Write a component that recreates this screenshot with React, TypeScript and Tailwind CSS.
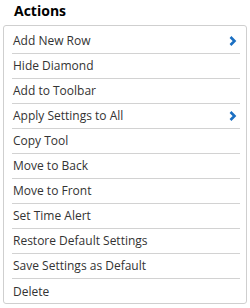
const items = [
  { label: "Add New Row", sub: true },
  { label: "Hide Diamond" },
  { label: "Add to Toolbar" },
  { label: "Apply Settings to All", sub: true },
  { label: "Copy Tool" },
  { label: "Move to Back" },
  { label: "Move to Front" },
  { label: "Set Time Alert" },
  { label: "Restore Default Settings" },
  { label: "Save Settings as Default" },
  { label: "Delete" },
];

function Chevron() {
  return (
    <svg width="8" height="10" viewBox="0 0 8 10" className="shrink-0">
      <path d="M1.5 1 L5.5 5 L1.5 9" fill="none" stroke="#1b6fc2" strokeWidth="2.6" />
    </svg>
  );
}

export default function App() {
  return (
    <div className="w-[250px] h-[308px] bg-white font-['Open_Sans',sans-serif] text-[#333]">
      <div className="h-[25px] pl-[14px] pt-[1px] text-[14px] leading-[20px] font-bold text-black">
        Actions
      </div>
      <div className="ml-[3px] w-[244px] h-[279px] border border-[#cfcfcf] rounded-[3px] pt-[3px]">
        <ul className="ml-2 mr-[6px]">
          {items.map((it, i) => (
            <li
              key={it.label}
              className={`flex items-center justify-between h-[25px] pl-[1px] pr-[3px] text-[12px] ${
                i < items.length - 1 ? "border-b border-[#d2d2d2]" : ""
              }`}
            >
              <span>{it.label}</span>
              {it.sub && <Chevron />}
            </li>
          ))}
        </ul>
      </div>
    </div>
  );
}
